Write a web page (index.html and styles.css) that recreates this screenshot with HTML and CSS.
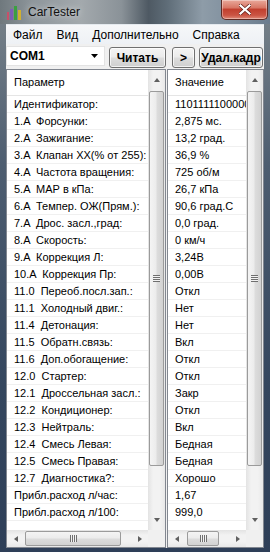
FILE: index.html
```html
<!DOCTYPE html>
<html lang="ru">
<head>
    <meta charset="UTF-8">
    <title>CarTester</title>
    <link rel="stylesheet" href="styles.css">
</head>
<body>

<div class="window">
    <div class="titlebar">
        <svg class="app-icon" width="14" height="14" viewBox="0 0 14 14">
            <rect x="0" y="6" width="2" height="8" fill="#c8506a"/>
            <rect x="3" y="3" width="3" height="11" fill="#7b5fb5"/>
            <rect x="7" y="0" width="3" height="14" fill="#3aa040"/>
            <rect x="11" y="4" width="3" height="10" fill="#d0b030"/>
        </svg>
        <span class="title">CarTester</span>
        <div class="close-btn">
            <svg width="12" height="11" viewBox="0 0 12 11">
                <path d="M1.5 1.5 L10.5 9.5 M10.5 1.5 L1.5 9.5" stroke="#5a1a14" stroke-width="3.6" stroke-linecap="square"/>
                <path d="M1.5 1.5 L10.5 9.5 M10.5 1.5 L1.5 9.5" stroke="#fff" stroke-width="2.2" stroke-linecap="square"/>
            </svg>
        </div>
    </div>

    <div class="client">
        <div class="menubar">
            <span class="menu-item">Файл</span>
            <span class="menu-item">Вид</span>
            <span class="menu-item">Дополнительно</span>
            <span class="menu-item">Справка</span>
        </div>

        <div class="toolbar">
            <div class="combo">
                <span>COM1</span>
                <svg class="combo-arrow" width="7" height="4" viewBox="0 0 7 4"><path d="M0 0 H7 L3.5 4 Z" fill="#000"/></svg>
            </div>
            <button class="btn btn-read">Читать</button>
            <button class="btn btn-next">&gt;</button>
            <button class="btn btn-del">Удал.кадр</button>
        </div>

        <div class="lists">
            <div class="listview list-params">
                <div class="lv-main">
                    <div class="lv-content">
                        <div class="lv-header">Параметр</div>
                        <div class="lv-row">Идентификатор:</div>
                        <div class="lv-row">1.A  Форсунки:</div>
                        <div class="lv-row">2.A  Зажигание:</div>
                        <div class="lv-row">3.A  Клапан ХХ(% от 255):</div>
                        <div class="lv-row">4.A  Частота вращения:</div>
                        <div class="lv-row">5.A  МАР в кПа:</div>
                        <div class="lv-row">6.A  Темпер. ОЖ(Прям.):</div>
                        <div class="lv-row">7.A  Дрос. засл.,град:</div>
                        <div class="lv-row">8.A  Скорость:</div>
                        <div class="lv-row">9.A  Коррекция Л:</div>
                        <div class="lv-row">10.A  Коррекция Пр:</div>
                        <div class="lv-row">11.0  Переоб.посл.зап.:</div>
                        <div class="lv-row">11.1  Холодный двиг.:</div>
                        <div class="lv-row">11.4  Детонация:</div>
                        <div class="lv-row">11.5  Обратн.связь:</div>
                        <div class="lv-row">11.6  Доп.обогащение:</div>
                        <div class="lv-row">12.0  Стартер:</div>
                        <div class="lv-row">12.1  Дроссельная засл.:</div>
                        <div class="lv-row">12.2  Кондиционер:</div>
                        <div class="lv-row">12.3  Нейтраль:</div>
                        <div class="lv-row">12.4  Смесь Левая:</div>
                        <div class="lv-row">12.5  Смесь Правая:</div>
                        <div class="lv-row">12.7  Диагностика?:</div>
                        <div class="lv-row">Прибл.расход л/час:</div>
                        <div class="lv-row">Прибл.расход л/100:</div>
                    </div>
                    <div class="vscroll">
                        <div class="sb-arrow"><span class="tri tri-up"></span></div>
                        <div class="sb-thumb-v"><span class="grip-v"></span></div>
                        <div class="sb-fill"></div>
                        <div class="sb-arrow"><span class="tri tri-down"></span></div>
                    </div>
                </div>
                <div class="lv-bottom">
                    <div class="hscroll">
                        <div class="sb-arrow-h"><span class="tri tri-left"></span></div>
                        <div class="sb-thumb-h thumb-params"><span class="grip-h"></span></div>
                        <div class="sb-fill"></div>
                        <div class="sb-arrow-h"><span class="tri tri-right"></span></div>
                    </div>
                    <div class="sb-corner"></div>
                </div>
            </div>

            <div class="listview list-values">
                <div class="lv-main">
                    <div class="lv-content">
                        <div class="lv-header">Значение</div>
                        <div class="lv-row">1101111100000000</div>
                        <div class="lv-row">2,875 мс.</div>
                        <div class="lv-row">13,2 град.</div>
                        <div class="lv-row">36,9 %</div>
                        <div class="lv-row">725 об/м</div>
                        <div class="lv-row">26,7 кПа</div>
                        <div class="lv-row">90,6 град.С</div>
                        <div class="lv-row">0,0 град.</div>
                        <div class="lv-row">0 км/ч</div>
                        <div class="lv-row">3,24В</div>
                        <div class="lv-row">0,00В</div>
                        <div class="lv-row">Откл</div>
                        <div class="lv-row">Нет</div>
                        <div class="lv-row">Нет</div>
                        <div class="lv-row">Вкл</div>
                        <div class="lv-row">Откл</div>
                        <div class="lv-row">Откл</div>
                        <div class="lv-row">Закр</div>
                        <div class="lv-row">Откл</div>
                        <div class="lv-row">Вкл</div>
                        <div class="lv-row">Бедная</div>
                        <div class="lv-row">Бедная</div>
                        <div class="lv-row">Хорошо</div>
                        <div class="lv-row">1,67</div>
                        <div class="lv-row">999,0</div>
                    </div>
                    <div class="vscroll">
                        <div class="sb-arrow"><span class="tri tri-up"></span></div>
                        <div class="sb-thumb-v"><span class="grip-v"></span></div>
                        <div class="sb-fill"></div>
                        <div class="sb-arrow"><span class="tri tri-down"></span></div>
                    </div>
                </div>
                <div class="lv-bottom">
                    <div class="hscroll">
                        <div class="sb-arrow-h"><span class="tri tri-left"></span></div>
                        <div class="sb-thumb-h thumb-values"><span class="grip-h"></span></div>
                        <div class="sb-fill"></div>
                        <div class="sb-arrow-h"><span class="tri tri-right"></span></div>
                    </div>
                    <div class="sb-corner"></div>
                </div>
            </div>
        </div>
    </div>
</div>

</body>
</html>
```

FILE: styles.css
```css
/* Reset */
* {
    margin: 0;
    padding: 0;
    box-sizing: border-box;
}

body {
    font-family: "Liberation Sans", Arial, sans-serif;
    background: #3a4a5e;
}

/* Window frame (Win7 glass) */
.window {
    width: 270px;
    height: 552px;
    background: linear-gradient(180deg, #7a848b 0%, #4d5d70 30%, #34465e 70%, #2e3f58 100%);
    overflow: hidden;
}

.titlebar {
    height: 24px;
    display: flex;
    align-items: center;
    background: linear-gradient(90deg, #6f787d 0%, #8e969b 12%, #a3a9ad 30%, #8a9298 45%, #4e5963 55%, #5f6d78 62%, #8e9ca8 75%, #7d8d9c 88%, #6b7c8e 100%);
}

.app-icon {
    margin-left: 7px;
    margin-top: 2px;
}

.title {
    margin-left: 7px;
    font-size: 12px;
    color: #111;
    text-shadow: 0 0 6px rgba(255, 255, 255, 0.8);
}

.close-btn {
    margin-left: auto;
    margin-right: 2px;
    align-self: flex-start;
    width: 47px;
    height: 20px;
    border: 1px solid #5e2a24;
    border-top: none;
    border-radius: 0 0 5px 5px;
    background: linear-gradient(180deg, #e9a99b 0%, #d87766 40%, #c2402f 50%, #cb5443 80%, #df8a78 100%);
    box-shadow: inset 0 0 0 1px rgba(255, 255, 255, 0.35);
    display: flex;
    justify-content: center;
    align-items: center;
}

/* Client area */
.client {
    margin-left: 6px;
    width: 258px;
    height: 524px;
    background: #f0f0f0;
    border-top: 1px solid #e4e9ee;
}

.menubar {
    height: 19px;
    display: flex;
    align-items: center;
    font-size: 12px;
    color: #000;
    background: linear-gradient(180deg, #f6f7f9 0%, #eef1f5 100%);
}

.menu-item {
    padding: 0 7px;
}

.menu-item:first-child {
    padding-left: 7px;
}

/* Toolbar */
.toolbar {
    margin-top: 2px;
    height: 22px;
    display: flex;
    align-items: flex-start;
}

.combo {
    width: 99px;
    height: 20px;
    background: #fff;
    border: 1px solid #e3e3e3;
    display: flex;
    align-items: center;
    padding-left: 3px;
    font-size: 12px;
    font-weight: bold;
}

.combo-arrow {
    margin-left: auto;
    margin-right: 6px;
}

.btn {
    height: 21px;
    margin-top: 1px;
    border: 1px solid #707070;
    border-radius: 3px;
    background: linear-gradient(180deg, #f4f4f4 0%, #ebebeb 48%, #dddddd 52%, #cfcfcf 100%);
    box-shadow: inset 0 0 0 1px rgba(255, 255, 255, 0.7);
    font-family: "Liberation Sans", Arial, sans-serif;
    font-size: 12px;
    font-weight: bold;
    color: #000;
}

.btn-read {
    width: 57px;
    margin-left: 4px;
}

.btn-next {
    width: 23px;
    margin-left: 6px;
}

.btn-del {
    width: 64px;
    margin-left: 4px;
}

/* List views */
.lists {
    margin-top: 1px;
    display: flex;
    gap: 1px;
}

.listview {
    height: 479px;
    border: 1px solid #828790;
    background: #fff;
    display: flex;
    flex-direction: column;
}

.list-params {
    width: 160px;
}

.list-values {
    width: 97px;
}

.lv-main {
    height: 460px;
    display: flex;
}

.lv-content {
    flex: 1;
    overflow: hidden;
    font-size: 11px;
    color: #000;
}

.lv-header {
    height: 26px;
    padding: 6px 0 0 7px;
    border-bottom: 1px solid #e5e5e5;
    white-space: nowrap;
}

.lv-row {
    height: 17px;
    padding: 2px 0 0 7px;
    border-bottom: 1px solid #f0f0f0;
    white-space: pre;
    overflow: hidden;
}

/* Scrollbars */
.vscroll {
    width: 17px;
    display: flex;
    flex-direction: column;
    background: linear-gradient(90deg, #e3e3e3 0%, #f2f2f2 30%, #f2f2f2 70%, #e8e8e8 100%);
}

.sb-arrow {
    height: 20px;
    display: flex;
    justify-content: center;
    align-items: center;
}

.sb-thumb-v {
    margin: 1px 1px 0;
    height: 375px;
    border: 1px solid #9b9b9b;
    border-radius: 2px;
    background: linear-gradient(90deg, #f4f4f4 0%, #ececec 45%, #dcdcdc 55%, #d2d2d2 100%);
    display: flex;
    justify-content: center;
    align-items: center;
}

.sb-fill {
    flex: 1;
}

.grip-v {
    width: 7px;
    height: 7px;
    background: repeating-linear-gradient(180deg, #6f6f6f 0 1px, #f2f2f2 1px 2px);
}

.lv-bottom {
    height: 17px;
    display: flex;
}

.hscroll {
    flex: 1;
    display: flex;
    background: linear-gradient(180deg, #e3e3e3 0%, #f2f2f2 30%, #f2f2f2 70%, #e8e8e8 100%);
}

.sb-arrow-h {
    width: 17px;
    display: flex;
    justify-content: center;
    align-items: center;
}

.sb-thumb-h {
    margin: 1px 0 1px 1px;
    border: 1px solid #9b9b9b;
    border-radius: 2px;
    background: linear-gradient(180deg, #f4f4f4 0%, #ececec 45%, #dcdcdc 55%, #d2d2d2 100%);
    display: flex;
    justify-content: center;
    align-items: center;
}

.thumb-params {
    width: 96px;
}

.thumb-values {
    width: 32px;
    margin-left: 2px;
}

.grip-h {
    width: 7px;
    height: 7px;
    background: repeating-linear-gradient(90deg, #6f6f6f 0 1px, #f2f2f2 1px 2px);
}

.sb-corner {
    width: 17px;
    background: #f0f0f0;
}

/* Arrow glyphs */
.tri {
    width: 0;
    height: 0;
    border-style: solid;
}

.tri-up {
    border-width: 0 3.5px 4px 3.5px;
    border-color: transparent transparent #606060 transparent;
}

.tri-down {
    border-width: 4px 3.5px 0 3.5px;
    border-color: #606060 transparent transparent transparent;
}

.tri-left {
    border-width: 3.5px 4px 3.5px 0;
    border-color: transparent #606060 transparent transparent;
}

.tri-right {
    border-width: 3.5px 0 3.5px 4px;
    border-color: transparent transparent transparent #606060;
}
```
